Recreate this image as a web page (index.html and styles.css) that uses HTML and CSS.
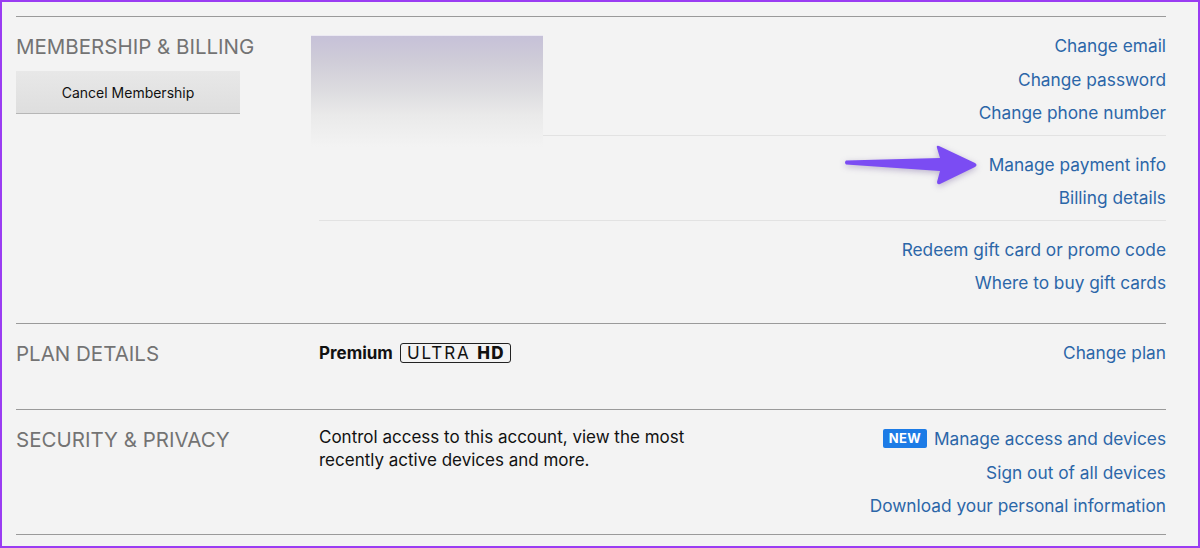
FILE: index.html
```html
<!DOCTYPE html>
<html lang="en">
<head>
<meta charset="utf-8">
<title>Account</title>
<link rel="stylesheet" href="styles.css">
</head>
<body>
<div class="frame">
  <section class="section s-membership">
    <div class="label-col">
      <h2 class="label">MEMBERSHIP &amp; BILLING</h2>
      <button class="cancel-btn">Cancel Membership</button>
    </div>
    <div class="content-col">
      <div class="blurred"></div>
      <div class="row">
        <div class="mid"></div>
        <div class="links">
          <a>Change email</a>
          <a>Change password</a>
          <a>Change phone number</a>
        </div>
      </div>
      <div class="row">
        <div class="mid"></div>
        <div class="links">
          <a>Manage payment info</a>
          <a>Billing details</a>
        </div>
      </div>
      <div class="row last">
        <div class="mid"></div>
        <div class="links">
          <a>Redeem gift card or promo code</a>
          <a>Where to buy gift cards</a>
        </div>
      </div>
    </div>
  </section>

  <section class="section s-plan">
    <div class="label-col">
      <h2 class="label">PLAN DETAILS</h2>
    </div>
    <div class="content-col">
      <div class="row last">
        <div class="mid plan">
          <span class="plan-name">Premium</span>
          <span class="uhd">ULTRA <b>HD</b></span>
        </div>
        <div class="links">
          <a>Change plan</a>
        </div>
      </div>
    </div>
  </section>

  <section class="section s-security">
    <div class="label-col">
      <h2 class="label">SECURITY &amp; PRIVACY</h2>
    </div>
    <div class="content-col">
      <div class="row last">
        <p class="desc">Control access to this account, view the most<br>recently active devices and more.</p>
        <div class="links">
          <a><span class="new-badge">NEW</span>Manage access and devices</a>
          <a>Sign out of all devices</a>
          <a>Download your personal information</a>
        </div>
      </div>
    </div>
  </section>
  <div class="end-line"></div>

  <svg class="arrow" width="150" height="60" viewBox="0 0 150 60" aria-hidden="true">
    <path d="M10,22.5 L104,20 L101,10 Q100,7 103,8 L139,25 Q142,27 139,29 L104,46 Q101,47 101,44 L104,33 L10,26.5 Q8,24.5 10,22.5 Z" fill="#7b4cf3"/>
  </svg>
</div>
</body>
</html>
```

FILE: styles.css
```css
* { box-sizing: border-box; }
html, body { margin: 0; padding: 0; }
body {
  font-family: "Inter", "Noto Sans", sans-serif;
  background: #f3f3f3;
}
.frame {
  position: relative;
  width: 1200px;
  height: 548px;
  border: 2px solid #9a3cf2;
  background: #f3f3f3;
  padding: 14px 32px 0 14px;
  overflow: hidden;
}
.section {
  display: grid;
  grid-template-columns: 303px 1fr;
  border-top: 1px solid #9a9a9a;
}
.s-membership { padding-bottom: 18.5px; }
.s-plan { padding-bottom: 34.5px; }
.s-security { padding-bottom: 6.5px; }
.end-line { border-top: 1px solid #9a9a9a; }

.label-col { padding-top: 18px; }
.label {
  margin: 0;
  font-size: 20.5px;
  line-height: 24px;
  font-weight: 400;
  color: #737373;
  letter-spacing: 0;
}
.cancel-btn {
  display: block;
  margin-top: 12px;
  width: 224px;
  height: 42px;
  border: 0;
  box-shadow: 0 1px 0 rgba(0,0,0,0.25);
  background: linear-gradient(#e8e8e8, #dedede);
  font-family: inherit;
  font-size: 14px;
  color: #111;
  padding: 0;
}
.content-col { position: relative; }
.blurred {
  position: absolute;
  left: -8px;
  top: 18px;
  width: 232px;
  height: 112px;
  border-top: 1px solid #ebe9f2;
  background: linear-gradient(180deg, #c6c1d8 0%, #cfccd8 22%, #dcdbdf 48%, #eaeaea 72%, #f3f3f3 100%);
  z-index: 1;
}
.row {
  display: flex;
  justify-content: space-between;
  align-items: flex-start;
  padding: 12px 0 5px;
  border-bottom: 1px solid #e2e2e2;
}
.row.last { border-bottom: 0; }
.links {
  display: flex;
  flex-direction: column;
  align-items: flex-end;
}
.links a {
  display: flex;
  align-items: center;
  font-size: 17.3px;
  line-height: 33.5px;
  color: #2b66a8;
  white-space: nowrap;
  cursor: pointer;
}
.plan {
  display: flex;
  align-items: center;
  height: 33.5px;
  gap: 7px;
}
.plan-name {
  font-size: 17px;
  font-weight: 700;
  color: #111;
}
.uhd {
  display: inline-block;
  border: 1.5px solid #222;
  border-radius: 3px;
  font-size: 17px;
  line-height: 18px;
  padding: 0 5px 0 6px;
  letter-spacing: 1.9px;
  color: #111;
}
.uhd b { font-weight: 800; letter-spacing: 1.2px; }
.desc {
  margin: 4px 0 0;
  font-size: 17px;
  line-height: 23px;
  color: #111;
}
.new-badge {
  display: inline-block;
  background: #1c7be6;
  color: #fff;
  font-size: 13px;
  font-weight: 700;
  line-height: 19px;
  height: 19px;
  padding: 0 6px;
  border-radius: 2px;
  margin-right: 7px;
  letter-spacing: 0.3px;
}
.arrow {
  position: absolute;
  left: 834px;
  top: 136px;
  filter: drop-shadow(0 2px 3px rgba(60, 30, 120, 0.3));
}
```
